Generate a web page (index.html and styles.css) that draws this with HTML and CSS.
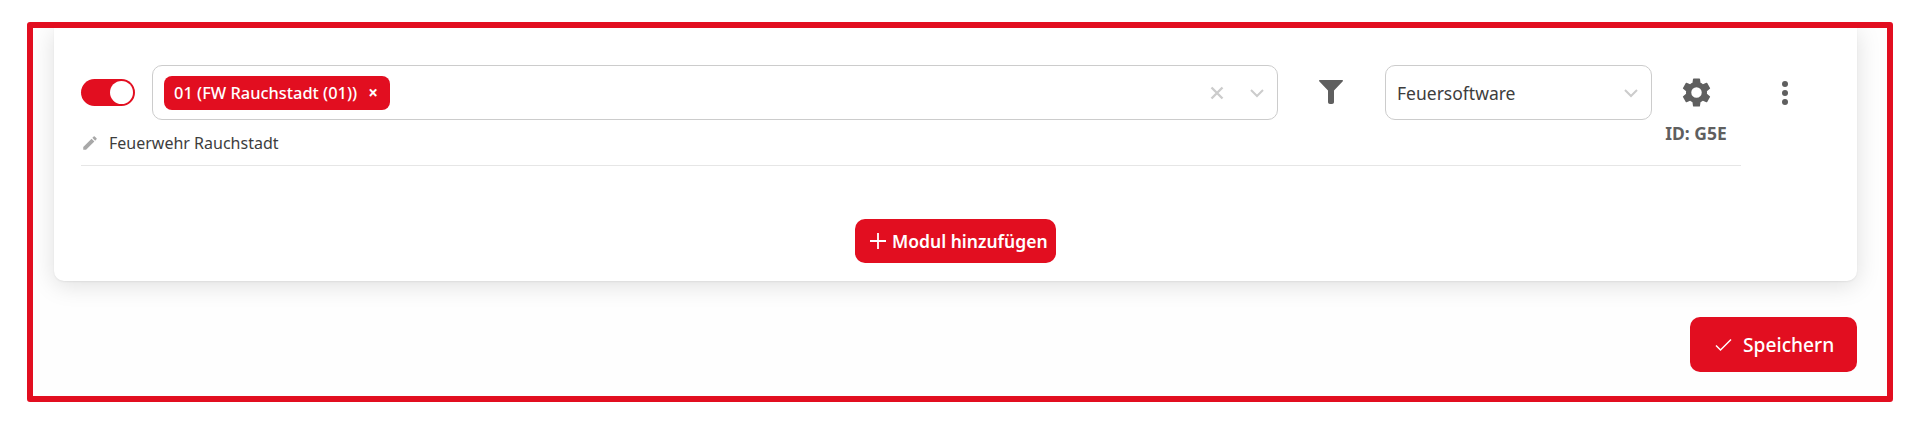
FILE: index.html
```html
<!DOCTYPE html>
<html lang="de">
<head>
<meta charset="utf-8">
<title>Module</title>
<link rel="stylesheet" href="styles.css">
</head>
<body>
<main class="frame">
  <section class="card">
    <div class="module">
      <div class="row">
        <div class="toggle"><span class="knob"></span></div>
        <div class="select select-main">
          <span class="tag">01 (FW Rauchstadt (01))<span class="tag-x">×</span></span>
          <span class="select-icons">
            <svg class="clear" width="14" height="14" viewBox="0 0 14 14"><path d="M1.500 1.500l11 11M12.500 1.500l-11 11" stroke="#ccc" stroke-width="2.400" fill="none"/></svg>
            <svg class="chev" width="16" height="10" viewBox="0 0 16 10"><path d="M2 2l6 6 6-6" stroke="#ccc" stroke-width="2" fill="none"/></svg>
          </span>
        </div>
        <div class="filter">
          <svg width="24" height="24" viewBox="0 0 24 24"><path d="M0 .8C0 .3.3 0 .8 0h22.400c.5 0 .8.3.8.8 0 .2 0 .3-.2.5L15 10.500V22c0 1.200-.8 2-2 2h-2c-1.200 0-2-.8-2-2V10.500L.2 1.300C0 1.100 0 1 0 .8z" fill="#5f5f5f"/></svg>
        </div>
        <div class="select select-type">
          <span class="select-value">Feuersoftware</span>
          <svg class="chev" width="16" height="10" viewBox="0 0 16 10"><path d="M2 2l6 6 6-6" stroke="#ccc" stroke-width="2" fill="none"/></svg>
        </div>
        <div class="settings">
          <svg width="35" height="35" viewBox="0 0 24 24"><path fill="#5f5f5f" d="M19.140 12.940c.04-.3.060-.61.060-.94 0-.32-.02-.64-.07-.94l2.030-1.580a.49.49 0 0 0 .12-.61l-1.920-3.320a.49.49 0 0 0-.59-.22l-2.390.96c-.5-.38-1.030-.7-1.620-.94l-.36-2.540a.48.480 0 0 0-.48-.41h-3.840a.48.480 0 0 0-.47.410l-.36 2.540c-.59.240-1.130.57-1.620.94l-2.390-.96a.49.49 0 0 0-.59.220L2.740 8.870a.48.480 0 0 0 .12.610l2.030 1.580c-.05.300-.09.630-.09.940s.02.640.07.940l-2.030 1.580a.49.49 0 0 0-.12.610l1.920 3.320c.12.220.37.290.59.220l2.390-.96c.5.380 1.030.7 1.620.94l.36 2.540c.05.240.24.410.48.41h3.840c.24 0 .44-.17.47-.41l.36-2.540c.59-.24 1.130-.56 1.620-.94l2.390.96c.22.080.47 0 .59-.22l1.920-3.320a.48.480 0 0 0-.12-.61l-2.010-1.580zM12 15.600A3.600 3.600 0 1 1 12 8.400a3.600 3.600 0 0 1 0 7.200z"/></svg>
          <span class="id-label">ID: G5E</span>
        </div>
        <div class="kebab"><span></span><span></span><span></span></div>
      </div>
      <div class="name-row">
        <svg width="18" height="18" viewBox="0 0 24 24"><path fill="#a8a8a8" d="M3 17.250V21h3.750L17.810 9.940l-3.750-3.750L3 17.250zM20.710 7.040a1 1 0 0 0 0-1.410l-2.340-2.340a1 1 0 0 0-1.410 0l-1.830 1.830 3.750 3.750 1.830-1.830z"/></svg>
        <span class="name">Feuerwehr Rauchstadt</span>
      </div>
    </div>
    <div class="add-wrap">
      <button class="btn btn-add" type="button">
        <svg width="18" height="18" viewBox="0 0 18 18"><path d="M9 1v16M1 9h16" stroke="#fff" stroke-width="1.800" fill="none"/></svg>
        Modul hinzufügen
      </button>
    </div>
  </section>
  <div class="actions">
    <button class="btn btn-save" type="button">
      <svg width="17" height="14" viewBox="0 0 17 14"><path d="M1 7.500l4.500 4.500L16 1.500" stroke="#fff" stroke-width="1.500" fill="none"/></svg>
      Speichern
    </button>
  </div>
</main>
</body>
</html>
```
FILE: styles.css
```css
* { box-sizing: border-box; }
html, body { margin: 0; padding: 0; background: #fff; }
body { padding: 22px 27px 0; font-family: "Noto Sans", "Open Sans", sans-serif; color: #333; overflow: hidden; }

.frame {
  width: 1866px;
  height: 380px;
  border: 6px solid #e20e20;
  border-radius: 3px;
  background: #fefefe;
  padding: 0 30px 0 21px;
  overflow: hidden;
}

.card {
  width: 1803px;
  height: 253px;
  background: #fff;
  border-radius: 0 0 10px 10px;
  box-shadow: 0 4px 24px rgba(0, 0, 0, .13), 0 1px 2px rgba(0, 0, 0, .06);
  padding: 37px 27px 0;
}

.module { width: 1660px; height: 101px; border-bottom: 1px solid #e6e6e6; }
.row { display: flex; align-items: flex-start; width: 1760px; height: 55px; }

.toggle {
  width: 54px;
  height: 27px;
  margin-top: 14px;
  border-radius: 14px;
  background: #e20e20;
  padding: 2px;
  display: flex;
  justify-content: flex-end;
  flex: none;
}
.knob { width: 23px; height: 23px; border-radius: 50%; background: #fff; }

.select {
  height: 55px;
  background: #fff;
  border: 1px solid #ccc;
  border-radius: 10px;
  display: flex;
  align-items: center;
  flex: none;
}
.select-main { width: 1126px; margin-left: 17px; padding: 0 12px 0 11px; justify-content: space-between; }
.select-type { width: 267px; margin-left: 42px; padding: 0 12px 0 11px; justify-content: space-between; }
.select-value { font-size: 17.500px; color: #3d3d3d; }
.select-icons { display: flex; align-items: center; gap: 25px; }
.clear { display: block; }
.chev { display: block; }

.tag {
  display: flex;
  align-items: center;
  height: 34px;
  padding: 0 10px;
  width: 226px;
  background: #e20e20;
  color: #fff;
  border-radius: 8px;
  font-size: 16.400px;
  font-weight: 500;
  white-space: nowrap;
  justify-content: space-between;
}
.tag-x { font-size: 17px; font-weight: 700; padding-right: 2px; }

.filter { width: 24px; margin: 15px 0 0 41px; height: 24px; flex: none; }
.filter svg { display: block; }

.settings { width: 62px; margin: 10px 0 0 13px; display: flex; flex-direction: column; align-items: center; flex: none; }
.settings svg { display: block; flex: none; }
.id-label { font-size: 17.500px; font-weight: 700; color: #5f5f5f; white-space: nowrap; line-height: 19px; margin-top: 14px; }

.kebab { width: 6px; margin: 16px 0 0 55px; display: flex; flex-direction: column; gap: 3px; flex: none; }
.kebab span { width: 6px; height: 6px; border-radius: 50%; background: #5f5f5f; }

.name-row { display: flex; align-items: center; gap: 10px; margin-top: 13px; height: 20px; }
.name-row svg { display: block; flex: none; }
.name { font-size: 16px; color: #3d3d3d; line-height: 20px; }

.add-wrap { display: flex; justify-content: center; padding: 53px 0 0; width: 1749px; }

.btn {
  display: flex;
  align-items: center;
  border: 0;
  background: #e20e20;
  color: #fff;
  font-family: inherit;
  cursor: pointer;
}
.btn-add { width: 201px; height: 44px; border-radius: 10px; font-size: 17.500px; font-weight: 600; gap: 5px; padding: 0 0 0 14px; white-space: nowrap; }
.btn-save { width: 167px; height: 55px; border-radius: 10px; font-size: 19.200px; font-weight: 500; gap: 11px; padding: 0 0 0 25px; }

.actions { display: flex; justify-content: flex-end; padding-top: 36px; }
```
